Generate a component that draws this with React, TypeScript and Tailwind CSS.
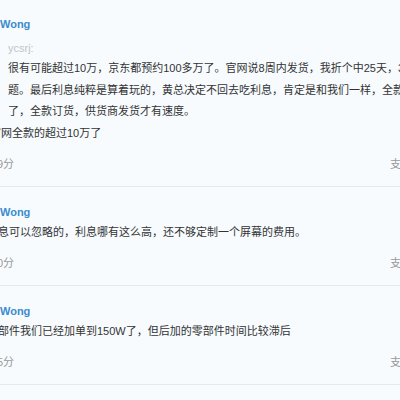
import type { FC } from "react";

/**
 * コメント一覧（切り抜き表示）
 */

type Comment = {
	id: string;
	name: string;
	quote?: { user: string; lines: string[] };
	lines: { text: string; shift: string }[];
	time: string;
};

const comments: Comment[] = [
	{
		id: "c1",
		name: "Wong",
		quote: {
			user: "ycsrj:",
			lines: [
				"很有可能超过10万，京东都预约100多万了。官网说8周内发货，我折个中25天，3",
				"题。最后利息纯粹是算着玩的，黄总决定不回去吃利息，肯定是和我们一样，全款",
				"了，全款订货，供货商发货才有速度。",
			],
		},
		lines: [{ text: "官网全款的超过10万了", shift: "ml-[-10px]" }],
		time: "9分",
	},
	{
		id: "c2",
		name: "Wong",
		lines: [
			{
				text: "利息可以忽略的，利息哪有这么高，还不够定制一个屏幕的费用。",
				shift: "ml-[-13px]",
			},
		],
		time: "0分",
	},
	{
		id: "c3",
		name: "Wong",
		lines: [
			{
				text: "零部件我们已经加单到150W了，但后加的零部件时间比较滞后",
				shift: "ml-[-13px]",
			},
		],
		time: "5分",
	},
];

const CommentItem: FC<{ comment: Comment; first?: boolean }> = ({
	comment,
	first,
}) => (
	<div
		className={`border-b border-[#e4e9ed] pb-[12px] ${first ? "pt-[14px]" : "pt-[15px]"}`}
	>
		<div className="text-[11px] leading-[20px] font-bold text-[#3a8ccf]">
			{comment.name}
		</div>

		{/* 引用 */}
		{comment.quote && (
			<div className="ml-[8px] mt-[4px]">
				<div className="text-[11px] leading-[20px] text-[#c0c4c8]">
					{comment.quote.user}
				</div>
				{comment.quote.lines.map((line) => (
					<div
						key={line}
						className="whitespace-nowrap text-[11px] leading-[21.5px] text-[#333]"
					>
						{line}
					</div>
				))}
			</div>
		)}

		{comment.lines.map((line) => (
			<div
				key={line.text}
				className={`whitespace-nowrap text-[11px] leading-[21.5px] text-[#333] ${line.shift}`}
			>
				{line.text}
			</div>
		))}

		<div className="mt-[9.5px] flex justify-between text-[11px] leading-[20px] text-[#999]">
			<span className="ml-[-3px]">{comment.time}</span>
			<span className="mr-[-12px]">支持</span>
		</div>
	</div>
);

export default function App() {
	return (
		<div
			className="h-[400px] w-[400px] overflow-hidden bg-[#f7fbfe]"
			style={{
				fontFamily: '"Liberation Sans", "Noto Sans CJK SC", sans-serif',
			}}
		>
			{comments.map((c, i) => (
				<CommentItem key={c.id} comment={c} first={i === 0} />
			))}
		</div>
	);
}
